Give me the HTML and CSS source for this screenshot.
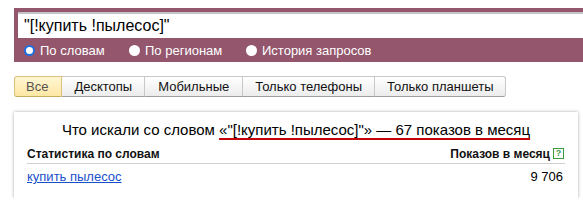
FILE: index.html
```html
<!DOCTYPE html>
<html lang="ru">
<head>
<meta charset="utf-8">
<link rel="stylesheet" href="styles.css">
</head>
<body>
<div class="search">
  <div class="query">"[!купить !пылесос]"</div>
  <div class="modes">
    <label class="mode"><span class="radio checked"></span>По словам</label>
    <label class="mode"><span class="radio"></span>По регионам</label>
    <label class="mode"><span class="radio"></span>История запросов</label>
  </div>
</div>
<div class="tabs">
  <span class="tab active">Все</span>
  <span class="tab">Десктопы</span>
  <span class="tab">Мобильные</span>
  <span class="tab">Только телефоны</span>
  <span class="tab">Только планшеты</span>
</div>
<div class="card">
  <div class="title">Что искали со словом <span class="hl">«"[!купить !пылесос]"» — 67 показов в месяц</span></div>
  <div class="head">
    <span>Статистика по словам</span>
    <span class="right">Показов в месяц<span class="help">?</span></span>
  </div>
  <div class="row">
    <a class="link" href="#">купить пылесос</a>
    <span>9 706</span>
  </div>
</div>
</body>
</html>
```

FILE: styles.css
```css
html, body {
  margin: 0;
  padding: 0;
  background: #fff;
  overflow: hidden;
}
body {
  padding: 8px 0 0 14px;
  font-family: "Liberation Sans", Arial, sans-serif;
  color: #000;
}
.search {
  background: #93566c;
  padding: 4px 0 0 4px;
  height: 50px;
}
.query {
  background: #fff;
  border-top: 2px solid #c4c4c4;
  height: 24px;
  line-height: 23px;
  font-size: 16px;
  padding-left: 6px;
  box-sizing: content-box;
}
.modes {
  display: flex;
  height: 24px;
  align-items: center;
  padding-left: 6px;
  font-size: 13px;
  color: #fff;
}
.mode {
  display: flex;
  align-items: center;
}
.mode:nth-child(1) { width: 105px; }
.mode:nth-child(2) { width: 117px; }
.radio {
  width: 11px;
  height: 11px;
  border-radius: 50%;
  background: #fff;
  margin-right: 5px;
  box-sizing: border-box;
}
.radio.checked {
  border: 2px solid #1f6fe0;
}
.tabs {
  display: flex;
  margin-top: 14px;
}
.tab {
  font-size: 13px;
  height: 21px;
  line-height: 20px;
  padding: 0 12px;
  box-sizing: border-box;
  border: 1px solid #c8c8c8;
  border-bottom-color: #9e9e9e;
  border-left: none;
  background: linear-gradient(#ffffff, #ececec);
  color: #111;
}
.tab:nth-child(3) { padding: 0 13px; }
.tab:first-child {
  border-left: 1px solid #d9bf77;
  border-radius: 3px 0 0 3px;
}
.tab:last-child {
  border-radius: 0 3px 3px 0;
}
.tab.active {
  background: linear-gradient(#fff6d2, #fde7a4);
  border-color: #dcc27c;
  border-bottom-color: #c9ad5e;
  color: #555;
  padding: 0 13px 0 11px;
}
.card {
  margin-top: 15px;
  width: 564px;
  box-sizing: border-box;
  padding: 8px 13px 10px;
  box-shadow: 0 0 3px rgba(0,0,0,0.35);
  background: #fff;
}
.title {
  text-align: center;
  font-size: 15px;
  line-height: 20px;
  height: 22px;
}
.hl {
  text-decoration: underline;
  text-decoration-color: #c4000c;
  text-decoration-thickness: 2px;
  text-underline-offset: 3px;
}
.head {
  display: flex;
  justify-content: space-between;
  align-items: center;
  font-size: 12px;
  font-weight: bold;
  height: 19px;
  border-bottom: 1px solid #cfcfcf;
  padding-top: 2px;
  color: #111;
}
.right {
  display: flex;
  align-items: center;
}
.help {
  display: inline-block;
  width: 11px;
  height: 11px;
  box-sizing: border-box;
  border: 1px solid #3d9a3d;
  color: #3d9a3d;
  font-size: 9px;
  line-height: 9px;
  text-align: center;
  margin-left: 3px;
  margin-right: 1px;
}
.row {
  display: flex;
  justify-content: space-between;
  font-size: 13px;
  padding-top: 5px;
  height: 24px;
  box-sizing: border-box;
  padding-right: 2px;
}
.link {
  color: #1a4fcb;
  text-decoration: underline;
}
```
